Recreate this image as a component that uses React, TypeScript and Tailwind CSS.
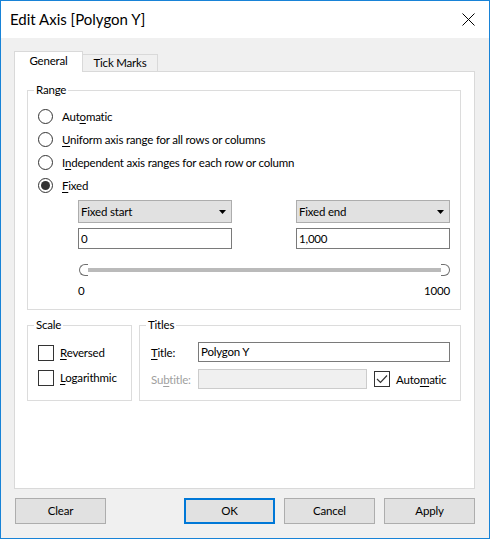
import React from 'react';

const Key = ({ children }: { children: React.ReactNode }) => (
  <span className="underline underline-offset-[2px] decoration-1">{children}</span>
);

const Radio = ({ checked, children }: { checked?: boolean; children: React.ReactNode }) => (
  <div className="flex items-center h-[23px]">
    <span className="w-[15px] h-[15px] rounded-full border border-[#333333] bg-white flex items-center justify-center">
      {checked && <span className="w-[9px] h-[9px] rounded-full bg-[#333333]" />}
    </span>
    <span className="ml-[9px] pt-px">{children}</span>
  </div>
);

const Checkbox = ({ checked }: { checked?: boolean }) => (
  <span className="w-[16px] h-[16px] border border-[#333333] bg-white flex items-center justify-center shrink-0">
    {checked && (
      <svg width="12" height="10" viewBox="0 0 12 10" fill="none">
        <path d="M1 5 L4.5 8.5 L11 1.5" stroke="#333333" strokeWidth="1.2" />
      </svg>
    )}
  </span>
);

const GroupLabel = ({ children }: { children: React.ReactNode }) => (
  <div className="-mt-[9px] ml-[6px] px-[2px] bg-white w-fit h-[16px] leading-[16px]">{children}</div>
);

const Dropdown = ({ label }: { label: string }) => (
  <div className="w-[154px] h-[23px] border border-[#adadad] bg-[#e1e1e1] flex items-center justify-between pl-[2px] pr-[5px]">
    <span>{label}</span>
    <svg width="7" height="4" viewBox="0 0 7 4">
      <path d="M0 0 H7 L3.5 4 Z" fill="#000" />
    </svg>
  </div>
);

const TextBox = ({ value }: { value: string }) => (
  <div className="w-[154px] h-[21px] border border-[#7a7a7a] bg-white flex items-center pl-[2px]">{value}</div>
);

const Button = ({ label, primary }: { label: string; primary?: boolean }) => (
  <button
    className={
      primary
        ? 'w-[91px] h-[26px] border-2 border-[#0078d7] bg-[#e1e1e1] text-black'
        : 'w-[91px] h-[26px] border border-[#adadad] bg-[#e1e1e1] text-black'
    }
  >
    {label}
  </button>
);

export default function App() {
  return (
    <div className="w-[490px] h-[539px] border border-[#1883d7] bg-[#f0f0f0] flex flex-col text-[11.5px] tracking-[-0.2px] text-black font-['Segoe_UI',Lato,sans-serif]">
      {/* title bar */}
      <div className="h-[37px] bg-white flex items-center justify-between pl-[9px] pr-[14px] shrink-0">
        <span className="text-[15px] tracking-normal">Edit Axis [Polygon Y]</span>
        <svg width="13" height="13" viewBox="0 0 13 13">
          <path d="M0.5 0.5 L12.5 12.5 M12.5 0.5 L0.5 12.5" stroke="#000" strokeWidth="1" />
        </svg>
      </div>

      <div className="flex flex-col pt-[13px] pl-[13px] pr-[14px]">
        {/* tabs */}
        <div className="flex items-end h-[20px]">
          <div className="w-[69px] h-[21px] -mb-px relative z-10 bg-white border border-b-0 border-[#d9d9d9] flex items-center justify-center pb-[2px]">
            General
          </div>
          <div className="w-[75px] h-[17px] bg-[#f0f0f0] border border-l-0 border-b-0 border-[#d9d9d9] flex items-center justify-center">
            Tick Marks
          </div>
        </div>

        {/* tab panel */}
        <div className="h-[418px] bg-white border border-[#d9d9d9] flex flex-col">
          {/* Range */}
          <div className="mt-[18px] ml-[12px] mr-[13px] h-[220px] border border-[#dcdcdc] flex flex-col">
            <GroupLabel>Range</GroupLabel>
            <div className="mt-[7px] pl-[10px] flex flex-col">
              <Radio>Aut<Key>o</Key>matic</Radio>
              <Radio><Key>U</Key>niform axis range for all rows or columns</Radio>
              <Radio>I<Key>n</Key>dependent axis ranges for each row or column</Radio>
              <Radio checked><Key>F</Key>ixed</Radio>
            </div>
            <div className="mt-[3px] pl-[50px] pr-[10px] flex justify-between">
              <Dropdown label="Fixed start" />
              <Dropdown label="Fixed end" />
            </div>
            <div className="mt-[5px] pl-[50px] pr-[10px] flex justify-between">
              <TextBox value="0" />
              <TextBox value="1,000" />
            </div>
            <div className="mt-[15px] pl-[51px] pr-[10px] flex items-center h-[12px]">
              <span className="w-[9px] h-[12px] border border-r-0 border-[#6f6f6f] rounded-l-[6px] bg-white shrink-0" />
              <span className="flex-1 h-[4px] bg-[#bababa]" />
              <span className="w-[9px] h-[12px] border border-l-0 border-[#6f6f6f] rounded-r-[6px] bg-white shrink-0" />
            </div>
            <div className="mt-[7px] pl-[50px] pr-[10px] flex justify-between h-[16px] leading-[16px]">
              <span>0</span>
              <span>1000</span>
            </div>
          </div>

          {/* Scale + Titles */}
          <div className="mt-[15px] ml-[12px] mr-[13px] flex gap-[7px]">
            <div className="w-[105px] h-[76px] border border-[#dcdcdc] flex flex-col">
              <GroupLabel>Scale</GroupLabel>
              <div className="mt-[7px] pl-[10px] flex flex-col">
                <div className="flex items-center h-[25px]">
                  <Checkbox />
                  <span className="ml-[6px] pt-px"><Key>R</Key>eversed</span>
                </div>
                <div className="flex items-center h-[25px]">
                  <Checkbox />
                  <span className="ml-[6px] pt-px"><Key>L</Key>ogarithmic</span>
                </div>
              </div>
            </div>

            <div className="flex-1 h-[76px] border border-[#dcdcdc] flex flex-col">
              <GroupLabel>Titles</GroupLabel>
              <div className="mt-[9px] pl-[11px] pr-[10px] flex items-center h-[20px]">
                <span className="w-[47px] pt-px"><Key>T</Key>itle:</span>
                <div className="flex-1 h-[20px] border border-[#7a7a7a] bg-white flex items-center pl-[2px]">Polygon Y</div>
              </div>
              <div className="mt-[7px] pl-[11px] pr-[10px] flex items-center h-[20px]">
                <span className="w-[47px] pt-px text-[#a0a0a0]">Su<Key>b</Key>title:</span>
                <div className="w-[169px] h-[20px] border border-[#cccccc] bg-[#f0f0f0]" />
                <span className="ml-[7px]"><Checkbox checked /></span>
                <span className="ml-[6px] pt-px">Auto<Key>m</Key>atic</span>
              </div>
            </div>
          </div>
        </div>

        {/* buttons */}
        <div className="mt-[9px] flex justify-between">
          <span className="ml-px"><Button label="Clear" /></span>
          <div className="flex gap-[9px]">
            <Button label="OK" primary />
            <Button label="Cancel" />
            <Button label="Apply" />
          </div>
        </div>
      </div>
    </div>
  );
}
